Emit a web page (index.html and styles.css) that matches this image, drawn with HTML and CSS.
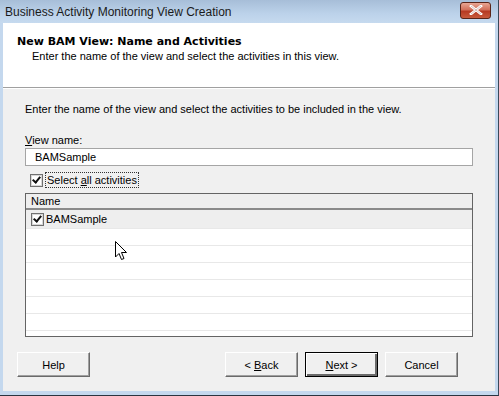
FILE: index.html
```html
<!DOCTYPE html>
<html lang="en">
<head>
    <meta charset="UTF-8">
    <title>Business Activity Monitoring View Creation</title>
    <link rel="stylesheet" href="styles.css">
</head>
<body>
    <div class="window">
        <div class="titlebar">
            <span class="title">Business Activity Monitoring View Creation</span>
            <button class="close-btn" aria-label="Close">
                <svg width="14" height="10" viewBox="0 0 14 10">
                    <path d="M2 1 L12 9 M12 1 L2 9" stroke="#fff" stroke-width="2.6" stroke-linecap="square"/>
                    <path d="M2 1 L12 9 M12 1 L2 9" stroke="#7a2a1c" stroke-width="0.6" fill="none" opacity="0.5"/>
                </svg>
            </button>
        </div>

        <div class="header">
            <h1>New BAM View: Name and Activities</h1>
            <p>Enter the name of the view and select the activities in this view.</p>
        </div>

        <div class="content">
            <p class="intro">Enter the name of the view and select the activities to be included in the view.</p>

            <label class="field-label" for="view-name"><u>V</u>iew name:</label>
            <div class="textbox" id="view-name">BAMSample</div>

            <div class="select-all">
                <span class="check checked"></span>
                <span class="focus-label">Select <u>a</u>ll activities</span>
            </div>

            <div class="list">
                <div class="list-header">Name</div>
                <div class="row selected"><span class="check checked"></span>BAMSample</div>
                <div class="row"></div>
                <div class="row"></div>
                <div class="row"></div>
                <div class="row"></div>
                <div class="row"></div>
                <div class="row"></div>
                <div class="row last"></div>

                <svg class="cursor" width="14" height="21" viewBox="0 0 14 21">
                    <path d="M0.5 0.5 L0.5 16 L4 12.5 L6.5 18.5 L9 17.5 L6.5 11.5 L11.5 11.5 Z" fill="#fff" stroke="#000" stroke-width="1"/>
                </svg>
            </div>

            <div class="buttons">
                <button class="btn">Help</button>
                <div class="nav">
                    <button class="btn">&lt; <u>B</u>ack</button>
                    <button class="btn default"><u>N</u>ext &gt;</button>
                    <button class="btn">Cancel</button>
                </div>
            </div>
        </div>
    </div>
</body>
</html>
```

FILE: styles.css
```css
html, body {
    margin: 0;
    padding: 0;
}
body {
    font-family: "Liberation Sans", Arial, sans-serif;
    font-size: 11px;
    color: #000;
    background: #fff;
}
.window {
    width: 499px;
    height: 396px;
    box-sizing: border-box;
    display: flex;
    flex-direction: column;
    background: #c4d8ee;
    border-right: 1px solid #3a4a5a;
    border-bottom: 1px solid #2a3440;
    padding: 0 3px 4px 3px;
}
.titlebar {
    height: 23px;
    margin: 0 -3px;
    padding: 0 6px 0 5px;
    display: flex;
    align-items: center;
    justify-content: space-between;
    background: linear-gradient(#a7bed8, #bcd2ea 60%, #c6daef);
}
.title {
    font-size: 12px;
    color: #1a1a1a;
}
.close-btn {
    width: 31px;
    height: 17px;
    margin-top: -3px;
    margin-right: 1px;
    padding: 0;
    border: 1px solid #5a2418;
    border-radius: 3px;
    background: linear-gradient(#e8a693, #d2705a 45%, #b63a22 55%, #c85a3c);
    display: flex;
    align-items: center;
    justify-content: center;
}
.header {
    height: 65px;
    box-sizing: border-box;
    background: #fff;
    padding: 12px 0 0 14px;
    border-bottom: 1px solid #a0a0a0;
}
.header h1 {
    margin: 0;
    font-family: "DejaVu Sans", Verdana, sans-serif;
    font-size: 11px;
    font-weight: bold;
    line-height: 14px;
}
.header p {
    margin: 1px 0 0 15px;
    line-height: 13px;
}
.content {
    flex: 1;
    background: #f0f0f0;
    border-top: 1px solid #fff;
    padding: 14px 22px 0 22px;
    display: flex;
    flex-direction: column;
}
.intro {
    margin: 0;
    line-height: 13px;
}
.field-label {
    margin-top: 18px;
    line-height: 13px;
}
.textbox {
    margin-top: 1px;
    height: 18px;
    box-sizing: border-box;
    border: 1px solid #a5a5a5;
    background: #fff;
    padding: 1px 0 0 9px;
    line-height: 14px;
}
.select-all {
    margin-top: 6px;
    height: 16px;
    display: flex;
    align-items: center;
    padding-left: 5px;
    gap: 3px;
}
.focus-label {
    outline: 1px dotted #333;
    outline-offset: 0;
    line-height: 14px;
    padding: 0 1px;
}
.check {
    width: 11px;
    height: 11px;
    border: 1px solid #707070;
    background: #fff;
    position: relative;
    display: inline-block;
    box-shadow: inset 0 0 0 1px #d8d8d8;
}
.check.checked::after {
    content: "";
    position: absolute;
    left: 3px;
    top: 0px;
    width: 3px;
    height: 6px;
    border: solid #111;
    border-width: 0 2px 2px 0;
    transform: rotate(40deg);
}
.list {
    position: relative;
    margin-top: 5px;
    height: 144px;
    box-sizing: border-box;
    border: 1px solid #646464;
    background: #fff;
    overflow: hidden;
}
.list-header {
    height: 14px;
    line-height: 14px;
    padding-left: 5px;
    background: #eeeeee;
    border-bottom: 2px solid #8a8a8a;
}
.row {
    height: 16px;
    border-bottom: 1px solid #e8e8e8;
}
.row.selected {
    height: 18px;
    background: #eeeeee;
    display: flex;
    align-items: center;
    padding-left: 5px;
    gap: 2px;
}
.row.last {
    border-bottom: none;
}
.cursor {
    position: absolute;
    left: 89px;
    top: 47px;
}
.buttons {
    margin: 15px -8px 0 -8px;
    display: flex;
    justify-content: space-between;
}
.nav {
    display: flex;
    gap: 7px;
    margin-right: 23px;
}
.btn {
    width: 73px;
    height: 25px;
    box-sizing: border-box;
    font-family: "Liberation Sans", Arial, sans-serif;
    font-size: 11px;
    color: #000;
    background: #f0f0f0;
    border: 1px solid;
    border-color: #fff #6a6a6a #6a6a6a #fff;
    box-shadow: inset -1px -1px 0 #a0a0a0;
    padding: 0;
}
.btn.default {
    border: 1px solid #000;
    box-shadow: inset 1px 1px 0 #fff, inset -2px -2px 0 #6a6a6a;
}
```
